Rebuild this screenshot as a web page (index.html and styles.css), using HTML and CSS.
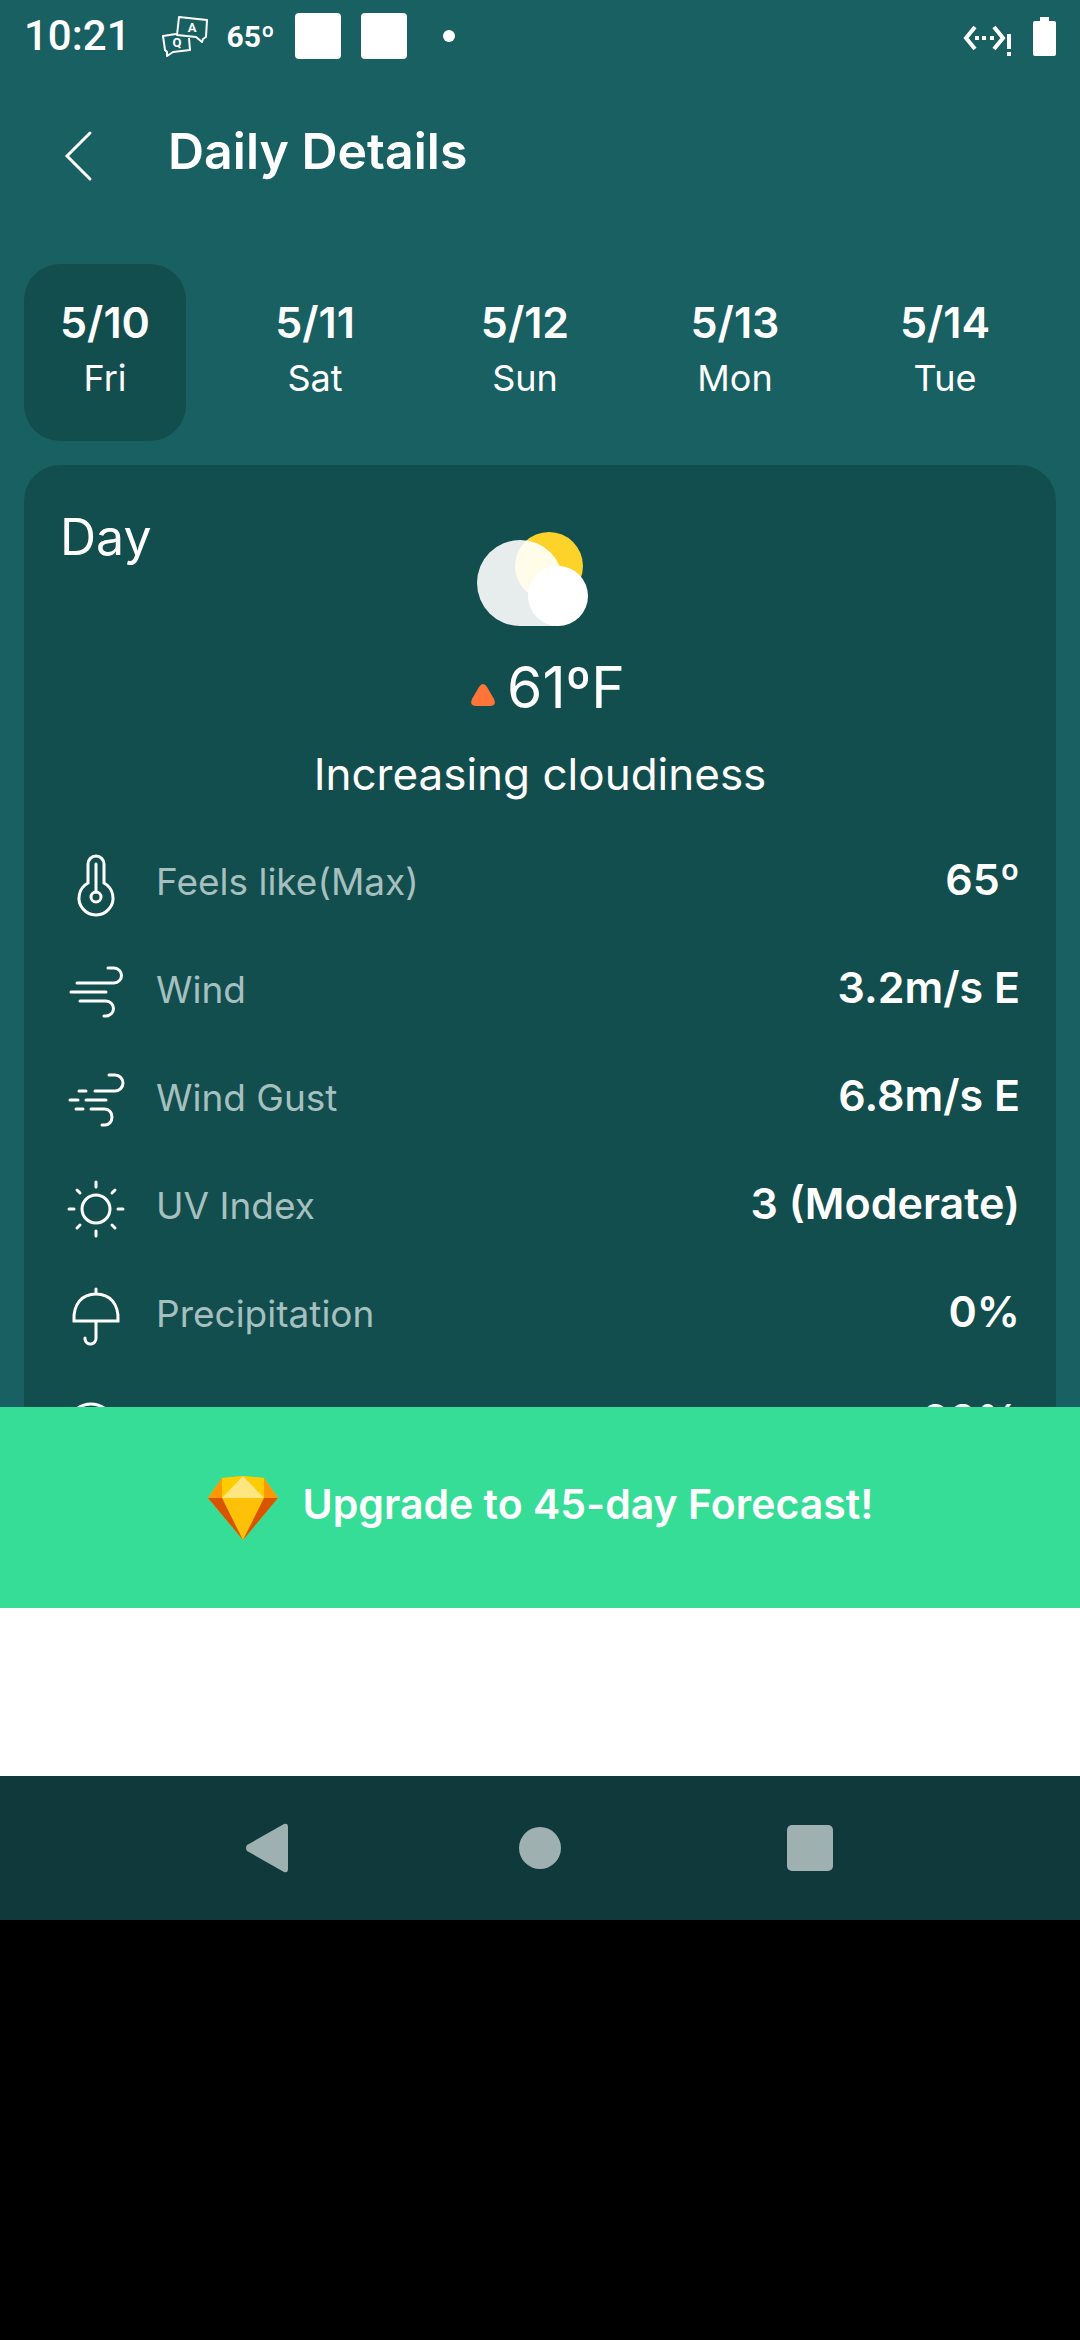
FILE: index.html
```html
<!DOCTYPE html>
<html lang="en">
<head>
<meta charset="utf-8">
<meta name="viewport" content="width=device-width, initial-scale=1">
<title>Daily Details</title>
<link rel="stylesheet" href="styles.css">
</head>
<body>
<div class="screen">
  <div class="app">
    <div class="status">
      <time class="clock">10:21</time>
      <svg class="cards-icon" viewBox="0 0 48 42" aria-hidden="true">
        <g fill="none" stroke="#fff" stroke-width="2" stroke-linejoin="round">
          <path d="M18 2 L46 5 L45 22 L42 24 L41 27 L35 22 L16 20 Z"/>
          <path d="M15 19 L2 21 L4 35 L6 37 V41 L12 37 L29 35 L28 23"/>
        </g>
        <text x="31" y="17" class="glyph">A</text>
        <text x="16" y="32" class="glyph">Q</text>
      </svg>
      <span class="status-temp">65º</span>
      <span class="notice"></span>
      <span class="notice"></span>
      <span class="dot"></span>
      <svg class="net-icon" viewBox="0 0 50 34" aria-hidden="true">
        <path d="M12 5 L3 16 L12 27 M31 5 L40 16 L31 27" fill="none" stroke="#fff" stroke-width="4"/>
        <path d="M12 14h4v4h-4z M19 14h4v4h-4z M27 14h4v4h-4z M44 12h4v15h-4z M44 30h4v4h-4z" fill="#fff"/>
      </svg>
      <svg class="battery-icon" viewBox="0 0 23 39" aria-hidden="true">
        <path d="M7 0h9v4h5a2 2 0 0 1 2 2v31a2 2 0 0 1-2 2H2a2 2 0 0 1-2-2V6a2 2 0 0 1 2-2h5z" fill="#fff"/>
      </svg>
    </div>

    <header class="header">
      <button class="back" type="button" aria-label="Back">
        <svg viewBox="0 0 28 52" aria-hidden="true"><path d="M26 3 L3 26 L26 49" fill="none" stroke="#fff" stroke-width="3" stroke-linecap="round"/></svg>
      </button>
      <h1 class="title">Daily Details</h1>
    </header>

    <nav class="days" aria-label="Days">
      <button class="day day-active" type="button"><b>5/10</b><span>Fri</span></button>
      <button class="day" type="button"><b>5/11</b><span>Sat</span></button>
      <button class="day" type="button"><b>5/12</b><span>Sun</span></button>
      <button class="day" type="button"><b>5/13</b><span>Mon</span></button>
      <button class="day" type="button"><b>5/14</b><span>Tue</span></button>
    </nav>

    <main class="card">
      <h2 class="part">Day</h2>
      <svg class="weather-icon" viewBox="0 0 112 96" aria-hidden="true">
        <defs><clipPath id="cloud"><circle cx="43" cy="52" r="43"/></clipPath></defs>
        <circle cx="72" cy="35" r="34" fill="#fdd32a"/>
        <circle cx="43" cy="52" r="43" fill="#e7ecec"/>
        <path d="M43 80h38v15H43z" fill="#e7ecec"/>
        <circle cx="72" cy="35" r="34" fill="#fffdea" clip-path="url(#cloud)"/>
        <circle cx="81" cy="65" r="30" fill="#fff"/>
      </svg>
      <p class="temp">
        <svg class="up-icon" viewBox="0 0 24 22" aria-hidden="true"><path d="M8 3q4-6 8 0l7 12q3 7-4 7H5q-7 0-4-7z" fill="#ff7438"/></svg>
        <span>61ºF</span>
      </p>
      <p class="summary">Increasing cloudiness</p>

      <dl class="facts">
        <div class="fact">
          <svg viewBox="0 0 60 60" aria-hidden="true"><path d="M22 28V9a8 8 0 0 1 16 0V28a17 17 0 1 1-16 0z M30 9V37"/><circle cx="30" cy="42" r="5"/></svg>
          <dt>Feels like(Max)</dt><dd>65º</dd>
        </div>
        <div class="fact">
          <svg viewBox="0 0 60 60" aria-hidden="true"><path d="M42 5h6a7 7 0 0 1 0 15H11 M5 29H40 M14 38H40a7 7 0 0 1 0 15H38"/></svg>
          <dt>Wind</dt><dd>3.2m/s E</dd>
        </div>
        <div class="fact">
          <svg viewBox="0 0 60 60" aria-hidden="true"><path d="M43 4h6a8 8 0 0 1 0 16H29 M13 20h7 M4 29h8 M20 29H40 M10 38h7 M25 38H39a7 8 0 0 1 0 16H36"/></svg>
          <dt>Wind Gust</dt><dd>6.8m/s E</dd>
        </div>
        <div class="fact">
          <svg viewBox="0 0 60 60" aria-hidden="true"><circle cx="30" cy="30" r="14"/><path d="M30 3v5 M30 52v5 M3 30h5 M52 30h5 M11 11l3 3 M46 46l3 3 M11 49l3-3 M46 14l3-3"/></svg>
          <dt>UV Index</dt><dd>3 (Moderate)</dd>
        </div>
        <div class="fact">
          <svg viewBox="0 0 60 60" aria-hidden="true"><path d="M30 2v4 M8 34C7 17 16 7 30 7S53 17 52 34z M30 34V51a5 5 0 0 1-11 1V51"/></svg>
          <dt>Precipitation</dt><dd>0%</dd>
        </div>
        <div class="fact">
          <svg viewBox="0 0 60 60" aria-hidden="true"><circle cx="25" cy="32" r="23"/></svg>
          <dt>Humidity</dt><dd>60%</dd>
        </div>
      </dl>
    </main>
  </div>

  <button class="upgrade" type="button">
    <svg class="gem" viewBox="0 0 72 66" aria-hidden="true">
      <path d="M15 3L36 1l21 2 14 20-35 42L1 23z" fill="#ffc107"/>
      <path d="M15 3L1 23h14z M57 3l14 20H57z" fill="#ff9800"/>
      <path d="M1 23h14l21 42z M71 23H57L36 65z" fill="#d85400"/>
      <path d="M15 3L36 1 15 23z M57 3L36 1l21 22z" fill="#ffcc00"/>
      <path d="M36 1L15 23h42z" fill="#ffe680"/>
    </svg>
    <span>Upgrade to 45-day Forecast!</span>
  </button>
  <div class="ad"></div>

  <div class="navbar">
    <button type="button" aria-label="Back"><svg viewBox="0 0 48 48" aria-hidden="true"><path d="M38 0q4-1 4 3v42q0 4-4 3L1 27q-2-3 0-6z"/></svg></button>
    <button type="button" aria-label="Home"><svg viewBox="0 0 48 48" aria-hidden="true"><circle cx="24" cy="24" r="21"/></svg></button>
    <button type="button" aria-label="Recent apps"><svg viewBox="0 0 48 48" aria-hidden="true"><rect x="1" y="1" width="46" height="46" rx="5"/></svg></button>
  </div>
</div>
</body>
</html>
```
FILE: styles.css
```css
* { box-sizing: border-box; }

body {
  margin: 0;
  background: #000;
  color: #fff;
  font-family: Inter, "Open Sans", sans-serif;
}

h1, h2, p, dl, dt, dd { margin: 0; font-weight: 400; }

button {
  border: 0;
  padding: 0;
  background: none;
  color: inherit;
  font: inherit;
}

svg { display: block; flex: none; overflow: visible; }

.app {
  height: 1407px;
  overflow: hidden;
  background: #186062;
}

.status {
  display: flex;
  align-items: center;
  height: 72px;
  padding: 0 24px;
  font-family: Roboto, sans-serif;
}
.clock { font-size: 42px; font-weight: 500; line-height: 48px; }
.cards-icon { width: 48px; height: 42px; margin-left: 30px; }
.glyph { fill: #fff; font-size: 13px; font-weight: 700; text-anchor: middle; }
.status-temp { margin-left: 18px; font-size: 30px; font-weight: 700; }
.notice { width: 46px; height: 46px; margin-left: 20px; border-radius: 4px; background: #fff; }
.dot { width: 12px; height: 12px; margin-left: 36px; border-radius: 50%; background: #fff; }
.net-icon { width: 50px; height: 34px; margin-left: auto; margin-top: 6px; }
.battery-icon { width: 23px; height: 39px; margin-left: 20px; }

.header {
  display: flex;
  align-items: center;
  height: 168px;
  padding: 0 64px;
  gap: 76px;
}
.back svg { width: 28px; height: 52px; }
.title { font-size: 50px; font-weight: 600; line-height: 72px; padding-bottom: 10px; }

.days {
  display: flex;
  justify-content: space-between;
  padding: 24px 54px 24px 24px;
}
.day {
  display: flex;
  flex-direction: column;
  align-items: center;
  width: 162px;
  height: 177px;
  padding-top: 28px;
  border-radius: 36px;
}
.day b { font-size: 43px; font-weight: 600; line-height: 60px; }
.day span { font-size: 36px; line-height: 52px; }
.day-active { background: #134e4e; }

.card {
  display: flex;
  flex-direction: column;
  align-items: center;
  margin: 0 24px;
  padding: 36px;
  border-radius: 36px;
  background: #134e4e;
}
.part { align-self: flex-start; height: 30px; font-size: 50px; line-height: 72px; }
.weather-icon { width: 112px; height: 96px; margin-right: 14px; }
.temp {
  display: flex;
  align-items: center;
  gap: 12px;
  margin-top: 22px;
  padding-left: 16px;
  font-size: 57px;
  line-height: 78px;
}
.up-icon { width: 24px; height: 22px; margin-top: 14px; }
.summary { margin-top: 17px; font-size: 44px; line-height: 60px; }

.facts { align-self: stretch; margin-top: 24px; }
.fact { display: flex; align-items: center; height: 108px; padding-left: 6px; }
.fact svg {
  width: 60px;
  height: 60px;
  margin-top: 6px;
  fill: none;
  stroke: #fff;
  stroke-width: 3;
  stroke-linecap: round;
}
.fact dt { margin-left: 30px; color: #a6bfbf; font-size: 37px; line-height: 54px; }
.fact dd { margin-left: auto; padding-bottom: 6px; font-size: 43px; font-weight: 600; line-height: 54px; }

.upgrade {
  display: flex;
  align-items: center;
  justify-content: center;
  gap: 24px;
  width: 100%;
  height: 201px;
  background: #35dd96;
  font-size: 41px;
  font-weight: 600;
}
.upgrade span { padding-bottom: 8px; }
.gem { width: 72px; height: 66px; }

.ad { height: 168px; background: #fff; }

.navbar {
  display: grid;
  grid-template-columns: repeat(3, 1fr);
  height: 144px;
  padding: 0 135px;
  background: #0f393a;
}
.navbar button { display: grid; place-items: center; }
.navbar svg { width: 48px; height: 48px; fill: #9fb0b0; }
```
